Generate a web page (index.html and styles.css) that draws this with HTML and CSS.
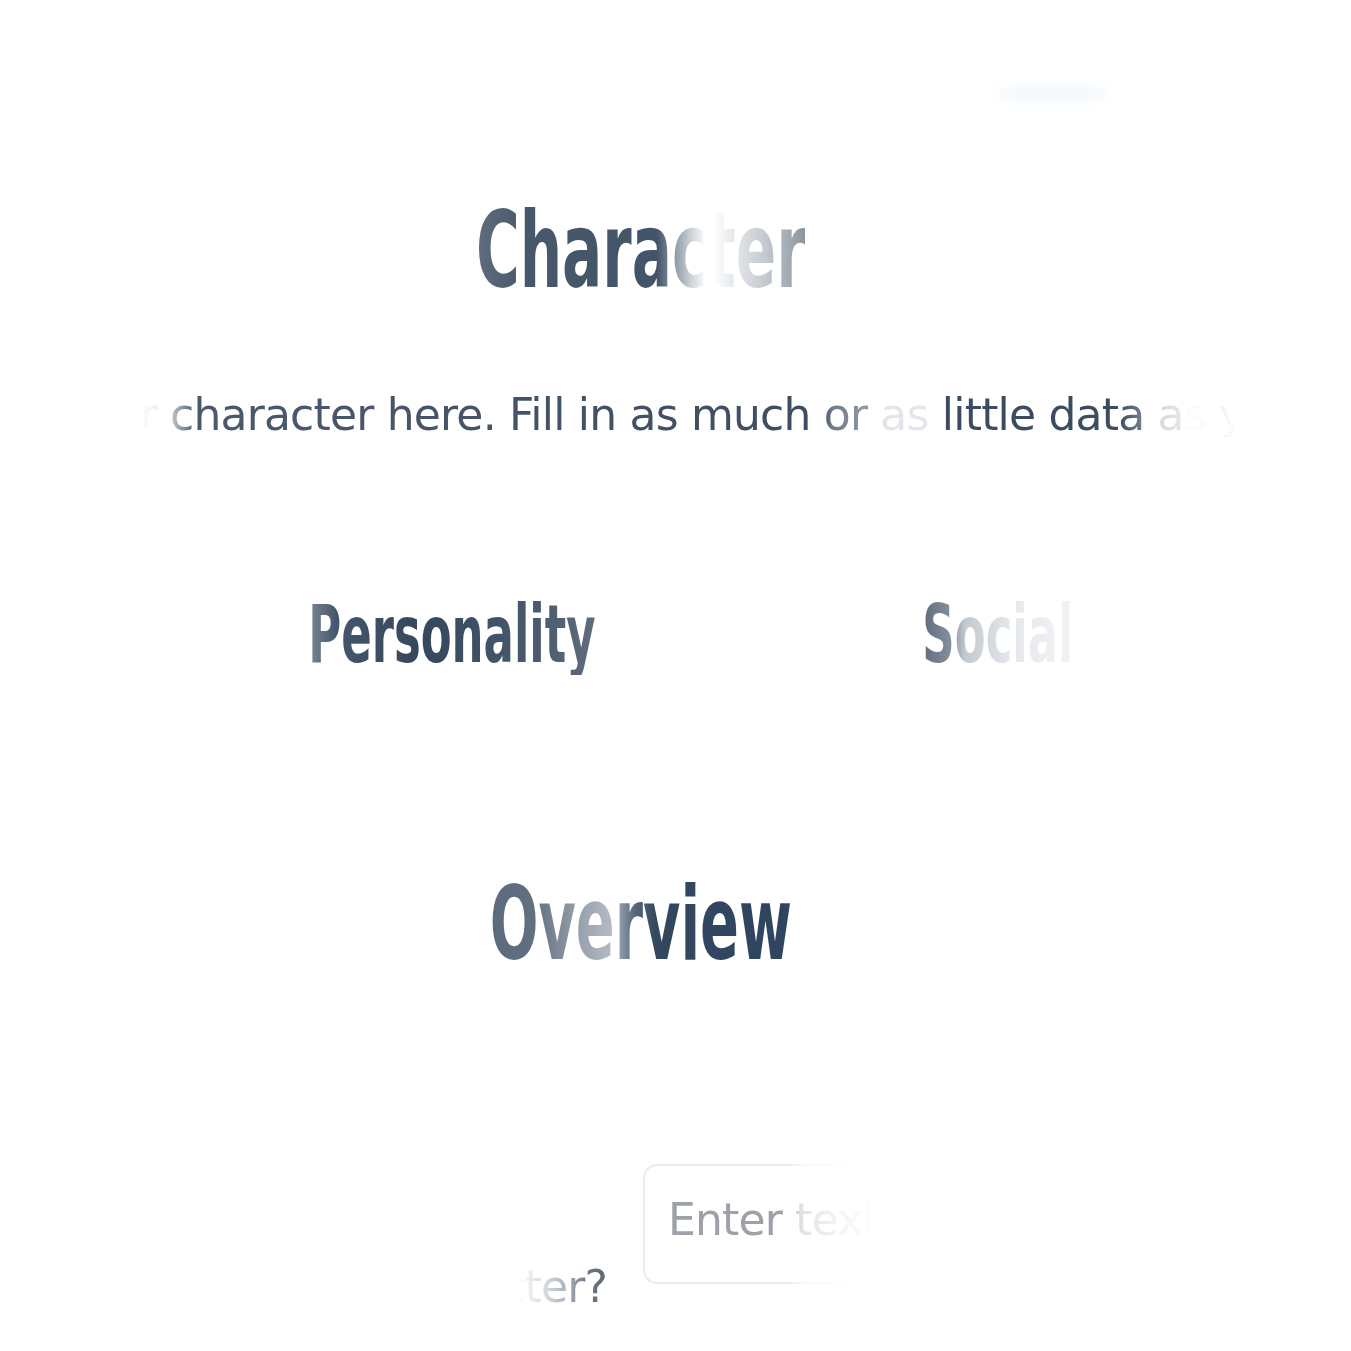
FILE: index.html
```html
<!DOCTYPE html>
<html lang="en">
<head>
<meta charset="utf-8">
<title>Character</title>
<link rel="stylesheet" href="styles.css">
</head>
<body>
<div class="glow"></div>
<main class="page">
  <header class="hero">
    <h1 class="title"><span class="grad grad-character">Character</span></h1>
    <p class="subtitle"><span class="sub-lead"><span>Describe your&nbsp;</span></span>character here. Fill in as much or as little data as you want.</p>
  </header>
  <nav class="tabs">
    <div class="tab-cell tab-cell-left"><span class="grad grad-personality">Personality</span></div>
    <div class="tab-cell tab-cell-right"><span class="grad grad-social">Social</span></div>
  </nav>
  <section class="overview">
    <h2 class="section-title"><span class="grad grad-overview">Overview</span></h2>
    <div class="field-row">
      <label class="field-label" for="name"><span>Who is your character?</span></label>
      <input id="name" class="field-input" type="text" placeholder="Enter text">
    </div>
  </section>
</main>
</body>
</html>
```
FILE: styles.css
```css
* { box-sizing: border-box; margin: 0; padding: 0; }
html, body { background: #fff; }
body {
  width: 1351px;
  height: 1351px;
  overflow: hidden;
  position: relative;
  font-family: "DejaVu Sans", "Noto Sans", sans-serif;
}
.glow {
  position: absolute;
  left: 995px;
  top: 87px;
  width: 115px;
  height: 13px;
  border-radius: 50%;
  background: #e2f0fa;
  filter: blur(6px);
  opacity: .6;
}
.page { padding-top: 198px; }

.title, .tab-cell, .section-title {
  font-family: "Liberation Sans Narrow", "DejaVu Sans Condensed", "Liberation Sans", sans-serif;
  font-weight: 700;
  line-height: 1;
}
.title { width: 1282px; text-align: center; font-size: 106px; }
.section-title { width: 1282px; text-align: center; font-size: 102px; margin-top: 198px; }

.grad {
  display: inline-block;
  color: transparent;
  -webkit-background-clip: text;
  background-clip: text;
  transform: scaleX(.625);
}
.grad-character {
  background-image: linear-gradient(to right, #5f6d7d 0%, #47586b 15%, #435468 55%, #8a95a1 60%, #d4d9de 66%, #ffffff 70%, #ffffff 72%, #e6e9ec 78%, #c4c9cf 88%, #8b949e 100%);
}
.grad-personality {
  background-image: linear-gradient(to right, #7a8694 0%, #44566b 10%, #34475d 40%, #4a5b6f 80%, #5f6d7d 100%);
}
.grad-social {
  background-image: linear-gradient(to right, #5f6c7b 0%, #8792a0 20%, #c3c9d0 28%, #e6e9ec 60%, #f2f3f5 100%);
}
.grad-overview {
  background-image: linear-gradient(to right, #5b6b7d 0%, #62707f 15%, #98a2ad 30%, #b3bac3 40%, #56677b 48%, #33485f 55%, #2e4460 100%);
}

.subtitle {
  margin-top: 89px;
  font-size: 44px;
  letter-spacing: -0.8px;
  line-height: 1;
  white-space: nowrap;
  color: transparent;
  -webkit-background-clip: text;
  background-clip: text;
  background-image: linear-gradient(to right,
    #fff 0px, #fff 140px, #eef0f2 155px, #c9ced4 170px, #4a596b 195px,
    #3e4d60 822px, #6f7b88 832px, #98a1ab 875px, #e1e4e8 885px, #e4e7ea 935px,
    #3c4b5e 945px, #3c4b5e 1118px, #7a8592 1145px, #d5dade 1160px, #e3e6e9 1180px,
    #fbfbfc 1186px, #fbfbfc 1204px, #e3e6e9 1210px, #fff 1236px, #fff 1351px);
}
.sub-lead {
  display: inline-flex;
  justify-content: flex-end;
  width: 170px;
}

.tabs {
  display: flex;
  margin-top: 158px;
  padding-left: 212px;
  gap: 156px;
}
.tab-cell { text-align: center; font-size: 80px; }
.tab-cell-left { width: 480px; }
.tab-cell-right { width: 300px; }

.field-row {
  display: flex;
  align-items: flex-start;
  gap: 36px;
  margin-top: 189px;
  padding-left: 107px;
}
.field-label {
  display: flex;
  justify-content: flex-end;
  width: 500px;
  margin-top: 101px;
  font-size: 44px;
  letter-spacing: -0.8px;
  line-height: 1;
  white-space: nowrap;
  overflow: hidden;
  color: transparent;
  -webkit-background-clip: text;
  background-clip: text;
  background-image: linear-gradient(to left, #5d6878 0px, #6b7585 20px, #a3abb4 38px, #d0d4d9 58px, #eceef0 78px, #fff 90px);
}
.field-input {
  width: 420px;
  height: 120px;
  border: 2px solid #e9ebef;
  border-radius: 14px;
  padding: 0 0 10px 23px;
  font-family: "DejaVu Sans", "Noto Sans", sans-serif;
  font-size: 44px;
  letter-spacing: -0.8px;
  color: #374151;
  background: #fff;
  outline: none;
  -webkit-mask-image: linear-gradient(to right, #000 0, #000 145px, rgba(0,0,0,.32) 158px, rgba(0,0,0,.12) 195px, transparent 235px);
  mask-image: linear-gradient(to right, #000 0, #000 145px, rgba(0,0,0,.32) 158px, rgba(0,0,0,.12) 195px, transparent 235px);
}
.field-input::placeholder { color: #9da2a9; }
```
